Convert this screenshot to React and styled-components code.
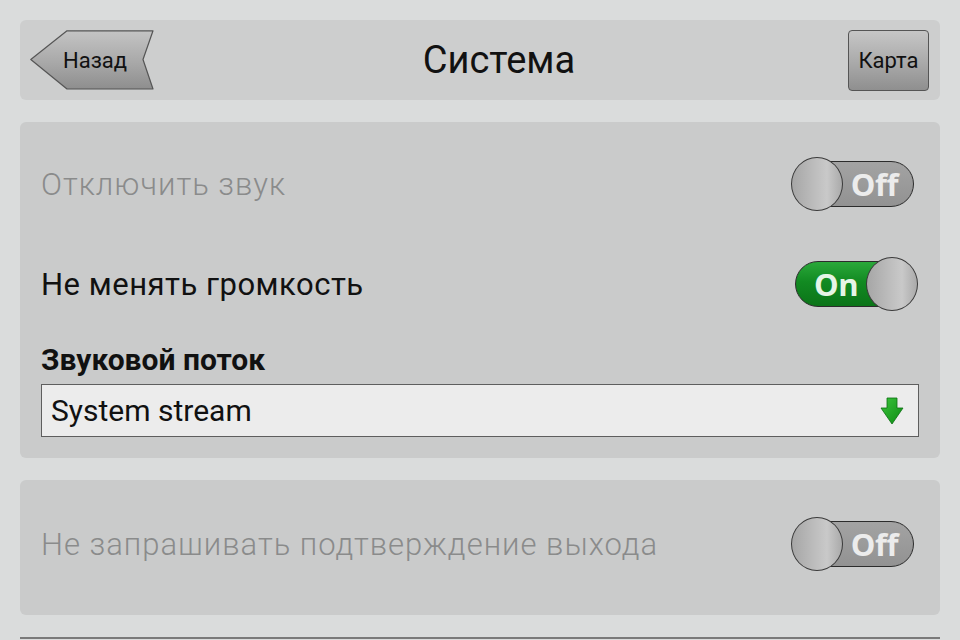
import React from "react";
import styled, { createGlobalStyle } from "styled-components";

const GlobalStyle = createGlobalStyle`
  html, body {
    margin: 0;
    padding: 0;
    background: #dadcdc;
    font-family: Roboto, "Liberation Sans", sans-serif;
  }
`;

const Screen = styled.div`
  width: 960px;
  height: 640px;
  overflow: hidden;
  box-sizing: border-box;
  padding: 20px 20px 0 20px;
  display: flex;
  flex-direction: column;
  gap: 22px;
  background: #dadcdc;
`;

const Panel = styled.div`
  background: #cacbcb;
  border-radius: 6px;
  padding: ${(p) => p.$pad || "0 21px"};
  display: flex;
  flex-direction: column;
`;

const Header = styled(Panel)`
  height: 80px;
  box-sizing: border-box;
  background: #cdcece;
  flex-direction: row;
  align-items: center;
  justify-content: space-between;
  padding: 0 11px 0 10px;
`;

const Title = styled.h1`
  margin: 0;
  font-size: 38px;
  font-weight: 400;
  color: #111;
  padding-right: 4px;
`;

const BackButton = styled.button`
  position: relative;
  width: 124px;
  height: 60px;
  border: none;
  background: none;
  padding: 0 0 0 33px;
  font-family: inherit;
  font-size: 22px;
  color: #111;
  text-align: left;
  cursor: pointer;
  span {
    position: relative;
  }
`;

const BackShape = styled.svg`
  position: absolute;
  left: 0;
  top: 0;
`;

const MapButton = styled.button`
  width: 81px;
  height: 61px;
  padding: 0;
  border: 1px solid #555;
  border-radius: 4px;
  background: linear-gradient(180deg, #c6c6c6 0%, #a9a9a9 55%, #8f8f8f 100%);
  font-family: inherit;
  font-size: 22px;
  color: #111;
  cursor: pointer;
`;

const Row = styled.div`
  height: 100px;
  display: flex;
  align-items: center;
  justify-content: space-between;
`;

const RowLabel = styled.span`
  font-size: 31px;
  font-weight: ${(p) => (p.$disabled ? 300 : 400)};
  letter-spacing: ${(p) => (p.$disabled ? "1px" : "0.5px")};
  color: ${(p) => (p.$disabled ? "#8a8b8b" : "#111")};
`;

const Toggle = styled.div`
  position: relative;
  width: 123px;
  height: 54px;
  margin-right: ${(p) => (p.$on ? "1px" : "5px")};
  display: flex;
  align-items: center;
  justify-content: ${(p) => (p.$on ? "flex-start" : "flex-end")};
`;

const Track = styled.div`
  box-sizing: border-box;
  width: 120px;
  height: 46px;
  border-radius: 23px;
  border: 1.5px solid #2c2c2c;
  background: ${(p) =>
    p.$on
      ? "linear-gradient(180deg, #2aa83a 0%, #128a22 45%, #0b7418 100%)"
      : "linear-gradient(180deg, #a3a3a3 0%, #929292 100%)"};
  display: flex;
  align-items: center;
  justify-content: ${(p) => (p.$on ? "flex-start" : "flex-end")};
  padding: ${(p) => (p.$on ? "0 0 0 18px" : "0 15px 0 0")};
  font-family: "Open Sans", "DejaVu Sans", sans-serif;
  font-weight: 700;
  font-size: 31px;
  letter-spacing: -0.5px;
  color: ${(p) => (p.$on ? "#e6f5e6" : "#ececec")};
`;

const Knob = styled.div`
  position: absolute;
  top: 0;
  ${(p) => (p.$on ? "right: 0;" : "left: 0;")}
  width: 52px;
  height: 54px;
  box-sizing: border-box;
  border-radius: 50%;
  border: 1px solid #3a3a3a;
  background: linear-gradient(90deg, #a6a6a6 0%, #bdbdbd 45%, #c9c9c9 70%, #aaaaaa 100%);
`;

const FieldLabel = styled.div`
  margin-top: 11px;
  font-size: 30px;
  font-weight: 700;
  line-height: 30px;
  color: #111;
`;

const Select = styled.div`
  margin-top: 9px;
  height: 53px;
  box-sizing: border-box;
  border: 1px solid #5e5e5e;
  background: #ececec;
  display: flex;
  align-items: center;
  justify-content: space-between;
  padding: 0 14px 0 9px;
  font-size: 30px;
  color: #111;
`;

const Divider = styled.div`
  height: 2px;
  background: #7a7a7a;
`;

function Switch({ on }) {
  return (
    <Toggle $on={on}>
      <Track $on={on}>{on ? "On" : "Off"}</Track>
      <Knob $on={on} />
    </Toggle>
  );
}

export default function App() {
  return (
    <>
      <GlobalStyle />
      <Screen>
        <Header>
          <BackButton>
            <BackShape width="124" height="60" viewBox="0 0 124 60">
              <defs>
                <linearGradient id="backGrad" x1="0" y1="0" x2="0" y2="1">
                  <stop offset="0" stopColor="#c4c4c4" />
                  <stop offset="0.55" stopColor="#a8a8a8" />
                  <stop offset="1" stopColor="#8e8e8e" />
                </linearGradient>
              </defs>
              <polygon
                points="0.8,29.5 37,0.8 123,0.8 113,29.5 123,59 37,59"
                fill="url(#backGrad)"
                stroke="#555"
                strokeWidth="1.2"
                strokeLinejoin="round"
              />
            </BackShape>
            <span>Назад</span>
          </BackButton>
          <Title>Система</Title>
          <MapButton>Карта</MapButton>
        </Header>

        <Panel $pad="12px 21px 21px 21px">
          <Row>
            <RowLabel $disabled>Отключить звук</RowLabel>
            <Switch on={false} />
          </Row>
          <Row>
            <RowLabel>Не менять громкость</RowLabel>
            <Switch on />
          </Row>
          <FieldLabel>Звуковой поток</FieldLabel>
          <Select>
            <span>System stream</span>
            <svg width="24" height="28" viewBox="0 0 24 28">
              <defs>
                <linearGradient id="arrowGrad" x1="0" y1="0" x2="1" y2="1">
                  <stop offset="0" stopColor="#3cc43c" />
                  <stop offset="1" stopColor="#0b8a12" />
                </linearGradient>
              </defs>
              <polygon
                points="7,1 17,1 17,11 23,11 12,27 1,11 7,11"
                fill="url(#arrowGrad)"
                stroke="#0a6e10"
                strokeWidth="0.8"
              />
            </svg>
          </Select>
        </Panel>

        <Panel $pad="14px 21px 21px 21px">
          <Row>
            <RowLabel $disabled>Не запрашивать подтверждение выхода</RowLabel>
            <Switch on={false} />
          </Row>
        </Panel>

        <Divider />
      </Screen>
    </>
  );
}
